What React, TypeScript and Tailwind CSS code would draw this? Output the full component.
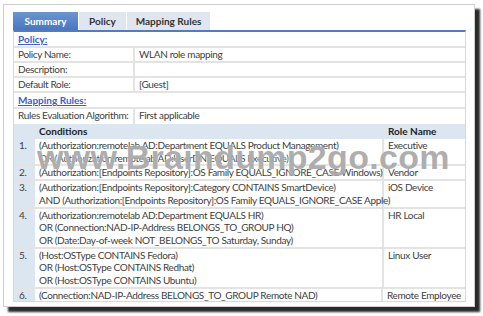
const rows = [
  {
    n: "1.",
    lines: [
      "(Authorization:remotelab AD:Department EQUALS Product Management)",
      "OR (Authorization:remotelab AD:UserDN EQUALS Executive)",
    ],
    role: "Executive",
  },
  {
    n: "2.",
    lines: ["(Authorization:[Endpoints Repository]:OS Family EQUALS_IGNORE_CASE Windows)"],
    role: "Vendor",
  },
  {
    n: "3.",
    lines: [
      "(Authorization:[Endpoints Repository]:Category CONTAINS SmartDevice)",
      "AND (Authorization:[Endpoints Repository]:OS Family EQUALS_IGNORE_CASE Apple)",
    ],
    role: "iOS Device",
  },
  {
    n: "4.",
    lines: [
      "(Authorization:remotelab AD:Department EQUALS HR)",
      "OR (Connection:NAD-IP-Address BELONGS_TO_GROUP HQ)",
      "OR (Date:Day-of-week NOT_BELONGS_TO Saturday, Sunday)",
    ],
    role: "HR Local",
  },
  {
    n: "5.",
    lines: [
      "(Host:OSType CONTAINS Fedora)",
      "OR (Host:OSType CONTAINS Redhat)",
      "OR (Host:OSType CONTAINS Ubuntu)",
    ],
    role: "Linux User",
  },
  {
    n: "6.",
    lines: ["(Connection:NAD-IP-Address BELONGS_TO_GROUP Remote NAD)"],
    role: "Remote Employee",
  },
];

const info = [
  ["Policy Name:", "WLAN role mapping"],
  ["Description:", ""],
  ["Default Role:", "[Guest]"],
];

export default function App() {
  return (
    <div className="w-[483px] h-[316px] bg-white overflow-hidden pl-[3px] pt-[4px] font-['Lato',sans-serif] text-[10px] tracking-[-0.35px] leading-[13px] text-[#404040] whitespace-nowrap">
      <div className="relative w-[472px] h-[303px] border border-[#cfcfcf] bg-white shadow-[5px_5px_2px_#2a2a2a] px-[9px] pt-[7px]">
        {/* tabs */}
        <div className="flex h-[18px] font-bold tracking-normal">
          <div className="w-[65px] flex items-center justify-center bg-gradient-to-b from-[#6b95d2] to-[#4a76bf] text-white">Summary</div>
          <div className="w-[48px] flex items-center justify-center bg-[#dfe6ef] border-l border-white text-[#333]">Policy</div>
          <div className="w-[84px] flex items-center justify-center bg-[#dfe6ef] border-l border-white text-[#333]">Mapping Rules</div>
        </div>
        <div className="w-[453px] border-t-2 border-[#4f7cc4] border-x border-x-[#d8d8d8] border-b border-b-[#d8d8d8]">
          <div className="h-[16px] px-[4px] pt-[1px] border-b-2 border-[#e3e3e3] font-bold text-[#3b5fc8] underline tracking-normal">Policy:</div>
          {info.map(([k, v]) => (
            <div key={k} className="flex h-[15px] border-b-2 border-[#e3e3e3]">
              <div className="w-[121px] px-[4px] border-r-2 border-[#e3e3e3]">{k}</div>
              <div className="px-[4px]">{v}</div>
            </div>
          ))}
          <div className="h-[16px] px-[4px] pt-[1px] border-b-2 border-[#e3e3e3] font-bold text-[#3b5fc8] underline tracking-normal">Mapping Rules:</div>
          <div className="flex h-[15px]">
            <div className="w-[121px] px-[4px] border-r-2 border-[#e3e3e3]">Rules Evaluation Algorithm:</div>
            <div className="px-[4px]">First applicable</div>
          </div>
          <div className="flex h-[15px] items-center bg-[#dce6f1] font-bold text-[#222] tracking-normal">
            <div className="w-[21px]" />
            <div className="w-[349px] px-[4px]">Conditions</div>
            <div className="flex-1 px-[4px]">Role Name</div>
          </div>
          {rows.map((r, i) => (
            <div key={r.n} className={i === rows.length - 1 ? "flex leading-[12.7px]" : "flex leading-[12.7px] border-b-2 border-[#e3e3e3]"}>
              <div className="w-[21px] bg-[#dce6f1] pl-[5px]">{r.n}</div>
              <div className="w-[349px] px-[4px] border-r-2 border-[#e3e3e3]">
                {r.lines.map((l) => (
                  <div key={l}>{l}</div>
                ))}
              </div>
              <div className="flex-1 px-[4px]">{r.role}</div>
            </div>
          ))}
        </div>
        <div className="absolute left-[33px] top-[135px] text-[34px] leading-[34px] font-bold font-['Liberation_Sans',sans-serif] text-[rgba(120,120,120,0.6)] [text-shadow:0_0_2px_#fff] tracking-[0.3px] pointer-events-none">
          www.Braindump2go.com
        </div>
      </div>
    </div>
  );
}
